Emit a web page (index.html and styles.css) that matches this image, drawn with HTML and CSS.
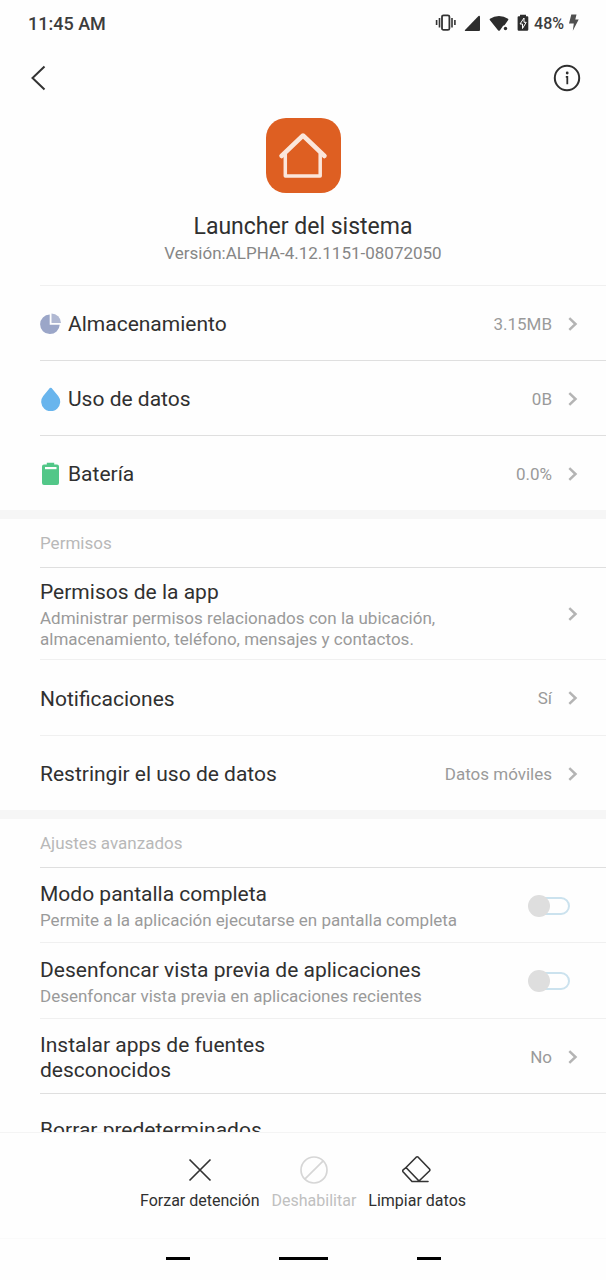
FILE: index.html
```html
<!DOCTYPE html>
<html lang="es">
<head>
<meta charset="utf-8">
<meta name="viewport" content="width=device-width, initial-scale=1">
<title>Launcher del sistema</title>
<link rel="stylesheet" href="styles.css">
</head>
<body>
<svg class="defs" aria-hidden="true">
  <symbol id="chevron" viewBox="0 0 10 14"><path d="M1.300 1.200 7.500 7l-6.200 5.800" fill="none" stroke="#b4b4b4" stroke-width="2.500"/></symbol>
</svg>

<div class="status-bar">
  <span>11:45 AM</span>
  <div class="status-icons">
    <svg width="21" height="18" viewBox="0 0 21 18" fill="none" stroke="#333" stroke-width="1.600"><rect x="7" y="1.300" width="7.400" height="14.600" rx="1.500" stroke-width="1.800"/><path d="M4.500 4v9.500M1.600 6v5M17 4v9.500M19.900 6v5"/></svg>
    <svg class="signal" width="17" height="17" viewBox="0 0 17 17"><path d="M16 1.500v13.500q0 1-1 1H1.300q-1-.2-.3-1L14.500 1q1.300-.8 1.500.5z" fill="#2d2d2d"/></svg>
    <svg class="wifi" width="20" height="17" viewBox="0 0 20 17" fill="#2d2d2d"><path d="M.8 5Q.3 4.300 1 3.800 5 1 10 1t9 2.800q.7.500.2 1.200L15.500 10.300q-1.800.1-2.200 1.700L11 15.200q-1 1.200-2 0z"/><circle cx="16.500" cy="13.500" r="1.700"/></svg>
    <svg class="battery" width="12" height="18" viewBox="0 0 12 18"><path d="M3 .7h6v1.600h1.300q1 0 1 1V15.500q0 1.200-1.200 1.200H1.800Q.6 16.700.6 15.500V3.300q0-1 1-1H3z" fill="#2d2d2d"/><path d="M7 4 3 10h2.500v4.500L9.200 8.300H7z" fill="#2d2d2d" stroke="#fff" stroke-width="1"/></svg>
    <span class="percent">48%</span>
    <svg class="bolt" width="11" height="18" viewBox="0 0 11 18"><path d="M3.300.5H8.500L7.300 5.500h3.400L4.800 16.800 5.800 9.500H1z" fill="#505050"/></svg>
  </div>
</div>

<header class="toolbar">
  <button type="button" aria-label="Atrás"><svg width="16" height="28" viewBox="0 0 16 28"><path d="M14.500 2.500 2.500 14l12 11.500" fill="none" stroke="#333" stroke-width="2"/></svg></button>
  <button type="button" aria-label="Información"><svg width="28" height="28" viewBox="0 0 28 28"><circle cx="14" cy="14" r="12.200" fill="none" stroke="#2f2f2f" stroke-width="2"/><circle cx="14.200" cy="9" r="1.400" fill="#2f2f2f"/><path d="M12.800 12.800h1.500v7.400" fill="none" stroke="#2f2f2f" stroke-width="1.800"/></svg></button>
</header>

<main class="content">
  <section class="app">
    <svg width="75" height="75" viewBox="0 0 75 75"><rect width="75" height="75" rx="20" fill="#de5f22"/><g fill="none" stroke="#fbe6db" stroke-linecap="round" stroke-linejoin="round"><path d="M19.300 36v22h34.900V36" stroke-width="3.500"/><path d="M15.500 38 37 17.500 58.500 38" stroke-width="4.500"/></g></svg>
    <h1>Launcher del sistema</h1>
    <p>Versión:ALPHA-4.12.1151-08072050</p>
  </section>

  <section class="group">
    <a class="row first" href="#">
      <svg class="lead" width="22" height="22" viewBox="0 0 22 22"><path d="M9.700 1.500v10.200h10A9.800 9.800 0 1 1 9.700 1.500z" fill="#9ba6c8"/><path d="M11.500.5A9.700 9.700 0 0 1 21 10H11.500z" fill="#b0b8d2"/></svg>
      <span class="label">Almacenamiento</span><span class="value">3.15MB</span>
      <svg class="chevron"><use href="#chevron"/></svg>
    </a>
    <a class="row" href="#">
      <svg class="lead" width="22" height="24" viewBox="0 0 22 24"><path d="M10.700.8q1 0 1.700 1.200l5.800 6.900A9.500 9.500 0 1 1 3.200 8.900L9 2q.7-1.200 1.700-1.200z" fill="#69b5ed"/></svg>
      <span class="label">Uso de datos</span><span class="value">0B</span>
      <svg class="chevron"><use href="#chevron"/></svg>
    </a>
    <a class="row" href="#">
      <svg class="lead" width="22" height="24" viewBox="0 0 22 24"><path d="M6.800.8h7.400v1.700H17q2 0 2 2V21q0 2-2 2H4q-2 0-2-2V4.500q0-2 2-2h2.800z" fill="#52c788"/><path d="M5 5h11.500v2.200H5z" fill="#fff"/></svg>
      <span class="label">Batería</span><span class="value">0.0%</span>
      <svg class="chevron"><use href="#chevron"/></svg>
    </a>
  </section>

  <section class="group titled">
    <h2>Permisos</h2>
    <a class="row" href="#">
      <span class="label">Permisos de la app<small>Administrar permisos relacionados con la ubicación, almacenamiento, teléfono, mensajes y contactos.</small></span>
      <svg class="chevron"><use href="#chevron"/></svg>
    </a>
    <a class="row faint roomy" href="#">
      <span class="label">Notificaciones</span><span class="value">Sí</span>
      <svg class="chevron"><use href="#chevron"/></svg>
    </a>
    <a class="row faint" href="#">
      <span class="label">Restringir el uso de datos</span><span class="value">Datos móviles</span>
      <svg class="chevron"><use href="#chevron"/></svg>
    </a>
  </section>

  <section class="group titled">
    <h2>Ajustes avanzados</h2>
    <label class="row">
      <span class="label">Modo pantalla completa<small>Permite a la aplicación ejecutarse en pantalla completa</small></span>
      <input class="switch" type="checkbox">
    </label>
    <label class="row faint roomy">
      <span class="label">Desenfoncar vista previa de aplicaciones<small>Desenfoncar vista previa en aplicaciones recientes</small></span>
      <input class="switch" type="checkbox">
    </label>
    <a class="row faint" href="#">
      <span class="label narrow">Instalar apps de fuentes desconocidos</span><span class="value">No</span>
      <svg class="chevron"><use href="#chevron"/></svg>
    </a>
    <a class="row last" href="#"><span class="label">Borrar predeterminados</span></a>
  </section>
</main>

<footer class="actions">
  <button type="button"><svg width="30" height="30" viewBox="0 0 30 30"><path d="M4.500 4.500l21 21M25.500 4.500l-21 21" stroke="#333" stroke-width="1.700"/></svg>Forzar detención</button>
  <button type="button" disabled><svg width="30" height="30" viewBox="0 0 30 30" fill="none" stroke="#d6d6d6" stroke-width="1.700"><circle cx="15" cy="15" r="13"/><path d="M24.200 5.800 5.800 24.200"/></svg>Deshabilitar</button>
  <button type="button"><svg width="30" height="30" viewBox="0 0 30 30" fill="none" stroke="#333" stroke-width="1.600" stroke-linejoin="round" stroke-linecap="round"><path d="M14.200 2.200Q15.200 1.400 16.200 2.200L27.500 14q.8 1-.1 2L17 26 4 12.500zM4 12.500.9 15.200q-.5.700.1 1.600L10 26.500h16"/></svg>Limpiar datos</button>
</footer>

<nav class="system-nav">
  <button type="button" aria-label="Recientes"></button>
  <button type="button" class="home" aria-label="Inicio"></button>
  <button type="button" aria-label="Volver"></button>
</nav>
</body>
</html>
```
FILE: styles.css
```css
* { box-sizing: border-box; }

body {
  margin: 0;
  height: 100vh;
  display: flex;
  flex-direction: column;
  background: #fefefe;
  color: #303030;
  font-family: Roboto, sans-serif;
}

button {
  padding: 0;
  border: 0;
  background: none;
  font: inherit;
  color: inherit;
}

svg { display: block; flex: none; }
.defs { position: absolute; width: 0; height: 0; }

.status-bar {
  display: flex;
  flex: none;
  justify-content: space-between;
  align-items: center;
  height: 46px;
  padding: 0 27px 0 28px;
  color: #3c3c3c;
  font-size: 18px;
  font-weight: 500;
}
.status-icons { display: flex; align-items: center; }
.signal { margin-left: 8px; }
.wifi { margin-left: 8px; }
.battery { margin-left: 8px; }
.percent { margin: 0 4px 0 5px; font-size: 16px; }

.toolbar {
  display: flex;
  flex: none;
  justify-content: space-between;
  align-items: center;
  height: 64px;
  padding: 0 25px 0 30px;
}

.content { flex: 1; min-height: 0; overflow: hidden; }

.app {
  display: flex;
  flex-direction: column;
  align-items: center;
  height: 175px;
  padding-top: 8px;
}
.app h1 {
  margin: 20px 0 0;
  font-size: 23px;
  font-weight: 400;
  line-height: 28px;
}
.app p { margin: 0; color: #868686; font-size: 17px; line-height: 24px; }

.group { padding-left: 40px; }
.titled { border-top: 9px solid #f6f6f6; }
.group h2 {
  margin: 0;
  color: #b8b8b8;
  font-size: 17px;
  font-weight: 400;
  line-height: 48px;
}

.row {
  display: flex;
  align-items: center;
  min-height: 75px;
  padding: 10px 28px 9px 0;
  border-top: 1px solid #dfdfdf;
  color: inherit;
  text-decoration: none;
}
.roomy { min-height: 76px; }
.last { min-height: 70px; }
.first, .faint { border-top-color: #f0f0f0; }
.lead { margin-right: 6px; }
.label { max-width: 440px; padding-top: 2px; font-size: 21px; line-height: 25px; }
.narrow { max-width: 240px; }
.label small {
  display: block;
  margin-top: 3px;
  color: #9a9a9a;
  font-size: 17px;
  line-height: 21px;
}
.value { margin-left: auto; color: #9a9a9a; font-size: 17px; }
.chevron { width: 10px; height: 14px; margin-left: 16px; }
.label + .chevron { margin-left: auto; }

.switch {
  position: relative;
  flex: none;
  width: 42px;
  height: 22px;
  margin: 0 8px 0 auto;
  appearance: none;
}
.switch::before {
  content: "";
  position: absolute;
  inset: 2px 0 2px 4px;
  border: 2px solid #cbe2ee;
  border-radius: 9px;
}
.switch::after {
  content: "";
  position: absolute;
  inset: 0 auto 0 0;
  width: 22px;
  border-radius: 50%;
  background: #dedede;
}

.actions {
  display: flex;
  flex: none;
  justify-content: center;
  align-items: flex-start;
  gap: 12px;
  height: 106px;
  padding-top: 22px;
  border-top: 1px solid #f4f4f4;
  font-size: 16px;
  line-height: 20px;
}
.actions button {
  display: flex;
  flex-direction: column;
  align-items: center;
  gap: 6px;
}
.actions button:disabled { color: #c0c0c0; }

.system-nav {
  display: flex;
  flex: none;
  justify-content: center;
  align-items: center;
  gap: 89px;
  height: 42px;
  padding-bottom: 2px;
  border-top: 1px solid #fafafa;
}
.system-nav button { width: 24px; height: 3px; background: #000; }
.system-nav .home { width: 49px; }
```
